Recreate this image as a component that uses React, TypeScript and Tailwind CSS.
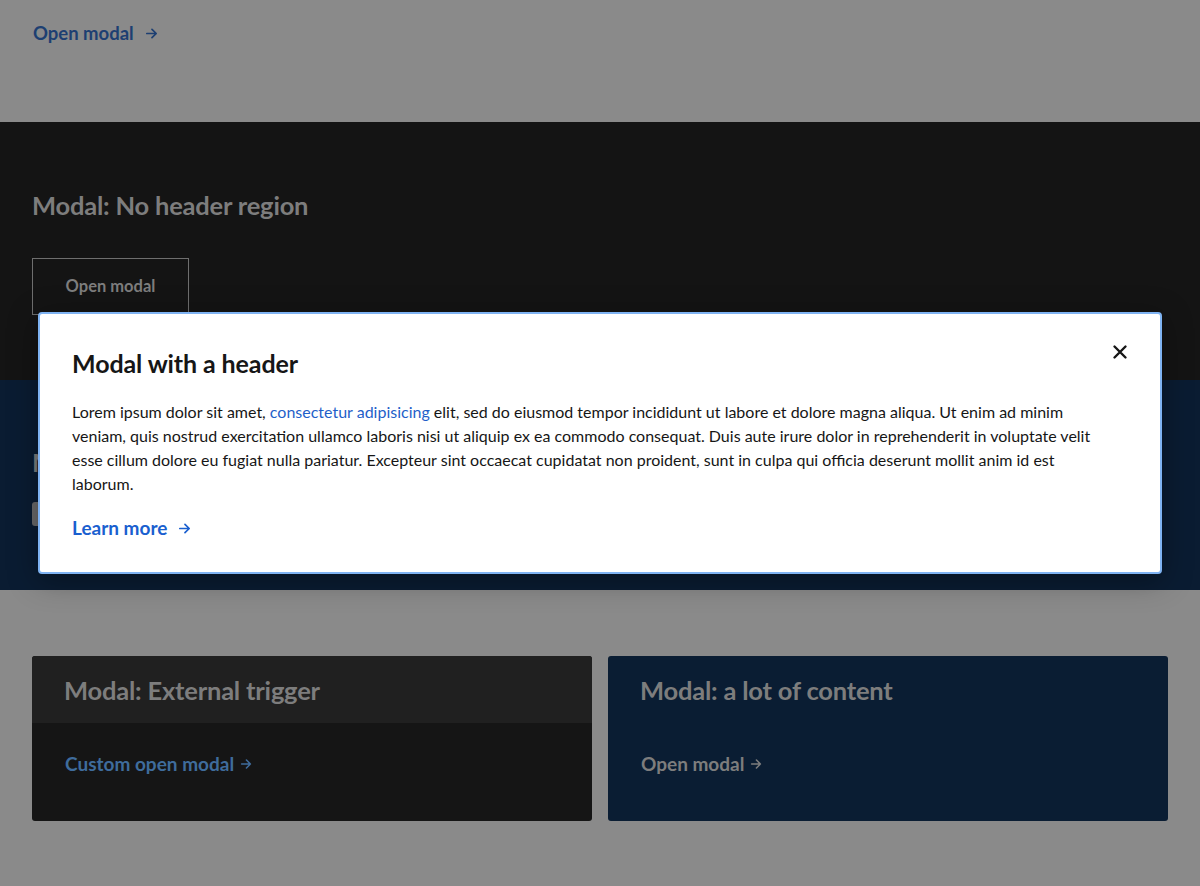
import React from "react";

const Arrow = ({ className = "" }: { className?: string }) => (
  <svg viewBox="0 0 16 16" className={className} fill="none" stroke="currentColor" strokeWidth="1.8" strokeLinecap="round" strokeLinejoin="round">
    <path d="M3 8h10M8.5 3.5 13 8l-4.5 4.5" />
  </svg>
);

export default function App() {
  return (
    <div className="relative w-[1200px] h-[886px] overflow-hidden bg-[#8a8a8a]" style={{ fontFamily: "Lato, 'Noto Sans', sans-serif" }}>
      {/* top section */}
      <div className="h-[122px] px-[33px] pt-[21px]">
        <a className="inline-flex items-center gap-[10px] text-[18.5px] leading-[24px] font-bold text-[#1d3f72]">
          Open modal <Arrow className="w-[15px] h-[15px]" />
        </a>
      </div>
      {/* dark section */}
      <div className="h-[258px] bg-[#141414] px-[32px] pt-[63px]">
        <h2 className="text-[25.5px] font-bold text-[#7d7d7d] leading-[40px] tracking-[-0.2px]">Modal: No header region</h2>
        <button className="mt-[33px] w-[157px] h-[57px] border border-[#6e6e6e] text-[16.5px] font-bold text-[#7d7d7d]">Open modal</button>
      </div>
      {/* navy section */}
      <div className="h-[210px] bg-[#0a1c32] px-[32px] pt-[62px]">
        <h2 className="text-[25.5px] font-bold text-[#7d7d7d] leading-[40px]">Modal: With overlay</h2>
        <button className="mt-[20px] w-[157px] h-[24px] rounded-[3px] bg-[#6a6a6a] text-[15px] font-bold text-[#1a1a1a]">Open modal</button>
      </div>
      {/* cards */}
      <div className="grid grid-cols-2 gap-[16px] px-[32px] pt-[66px]">
        <div className="rounded-[3px] overflow-hidden bg-[#151515] h-[165px]">
          <div className="h-[67px] bg-[#202020] px-[32px] pt-[14px]">
            <h3 className="text-[25.5px] font-bold text-[#7d7d7d] leading-[40px] tracking-[-0.2px]">Modal: External trigger</h3>
          </div>
          <div className="px-[33px] pt-[29px]">
            <a className="inline-flex items-center gap-[5px] text-[19px] leading-[24px] font-bold text-[#3f6c9c]">
              Custom open modal <Arrow className="w-[14px] h-[14px]" />
            </a>
          </div>
        </div>
        <div className="rounded-[3px] bg-[#0a1d33] h-[165px] px-[32px] pt-[14px] flex flex-col">
          <h3 className="text-[25.5px] font-bold text-[#7d7d7d] leading-[40px] tracking-[-0.2px]">Modal: a lot of content</h3>
          <a className="mt-[42px] self-start inline-flex items-center gap-[5px] text-[19px] leading-[24px] font-bold text-[#7d7d7d] ml-[1px]">
            Open modal <Arrow className="w-[14px] h-[14px]" />
          </a>
        </div>
      </div>

      {/* modal */}
      <div className="absolute left-[38px] top-[312px] w-[1124px] h-[262px] bg-white border-2 border-[#7fb3f2] rounded-[4px] shadow-[0_6px_30px_rgba(0,0,0,0.35)] px-[32px] pt-[31px]">
        <div className="flex items-start justify-between">
          <h2 className="text-[25px] font-bold text-[#161616] leading-[36px] tracking-[-0.1px]">Modal with a header</h2>
          <button className="mt-[-1px] mr-[0px] text-[#161616]" aria-label="Close">
            <svg viewBox="0 0 16 16" className="w-[16px] h-[16px]" fill="none" stroke="currentColor" strokeWidth="2.4" strokeLinecap="round">
              <path d="M2.5 2.5l11 11M13.5 2.5l-11 11" />
            </svg>
          </button>
        </div>
        <p className="mt-[19px] text-[16px] leading-[24px] text-[#161616] pr-[28px]">
          Lorem ipsum dolor sit amet, <a className="text-[#1f5fc9]">consectetur adipisicing</a> elit, sed do eiusmod tempor incididunt ut labore et dolore magna aliqua. Ut enim ad minim veniam, quis nostrud exercitation ullamco laboris nisi ut aliquip ex ea commodo consequat. Duis aute irure dolor in reprehenderit in voluptate velit esse cillum dolore eu fugiat nulla pariatur. Excepteur sint occaecat cupidatat non proident, sunt in culpa qui officia deserunt mollit anim id est laborum.
        </p>
        <a className="mt-[20px] inline-flex items-center gap-[10px] text-[19px] leading-[24px] font-bold text-[#1a5fcf]">
          Learn more <Arrow className="w-[15px] h-[15px]" />
        </a>
      </div>
    </div>
  );
}
